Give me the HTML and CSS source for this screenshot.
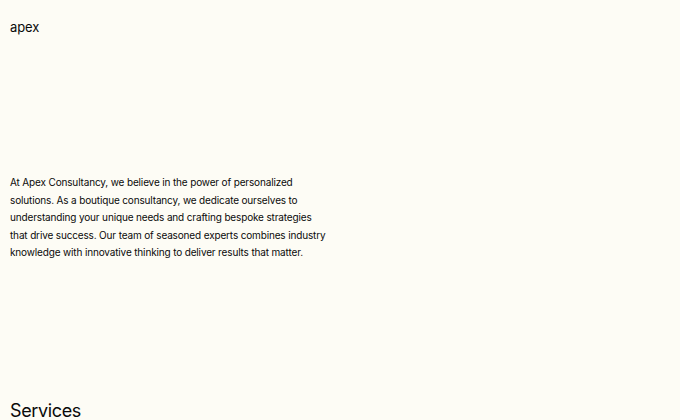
FILE: index.html
```html
<!DOCTYPE html>
<html>
<head>
<meta charset="utf-8">
<link rel="stylesheet" href="styles.css">
</head>
<body>
<header class="header"><span class="logo">apex</span></header>
<section class="intro">
<p>At Apex Consultancy, we believe in the power of personalized solutions. As a boutique consultancy, we dedicate ourselves to understanding your unique needs and crafting bespoke strategies that drive success. Our team of seasoned experts combines industry knowledge with innovative thinking to deliver results that matter.</p>
</section>
<section class="services">
<h2 class="services-title">Services</h2>
</section>
</body>
</html>
```
FILE: styles.css
```css
html, body { margin: 0; padding: 0; }
body {
  background: #fdfcf5;
  color: #0a0a0a;
  font-family: Inter, "Noto Sans", sans-serif;
}
.header { padding: 16px 10px 0; height: 40px; box-sizing: border-box; }
.logo { font-size: 13px; line-height: 20px; letter-spacing: -0.01em; }
.intro { padding: 134px 10px 0; }
.intro p { margin: 0; max-width: 320px; font-size: 10px; line-height: 17.5px; letter-spacing: -0.015em; }
.services { padding: 137px 10px 0; }
.services-title { margin: 0; font-weight: 400; font-size: 18px; line-height: 24px; letter-spacing: -0.02em; }
```
